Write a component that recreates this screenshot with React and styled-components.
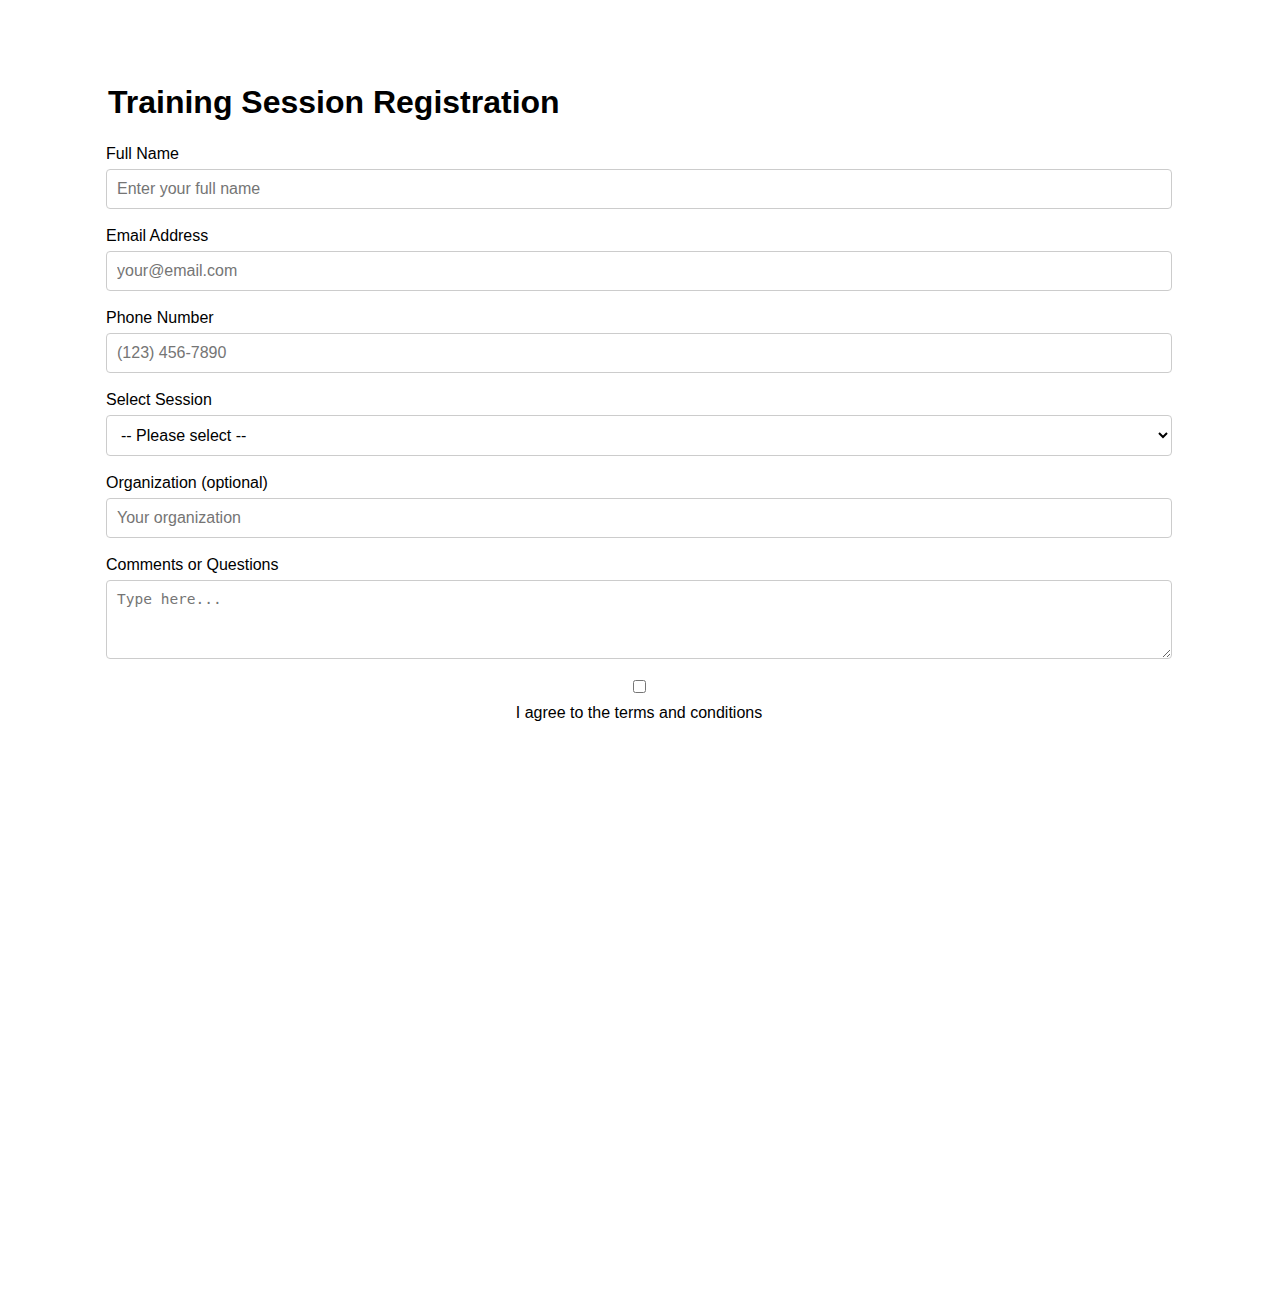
import React from "react";
import styled, { createGlobalStyle } from "styled-components";

const GlobalStyle = createGlobalStyle`
  * { box-sizing: border-box; }
  html, body { margin: 0; padding: 0; background: #fff; }
  body {
    font-family: "Liberation Sans", Arial, sans-serif;
    color: #000;
  }
`;

const Page = styled.main`
  width: 1066px;
  margin: 0 auto;
  padding-top: 84px;
`;

const Title = styled.h1`
  font-size: 32px;
  font-weight: 700;
  margin: 0 0 24px 2px;
  line-height: 37px;
`;

const Form = styled.form`
  display: flex;
  flex-direction: column;
`;

const Field = styled.div`
  display: flex;
  flex-direction: column;
  margin-bottom: 18px;
`;

const Label = styled.label`
  font-size: 16px;
  line-height: 18px;
  margin-bottom: 6px;
`;

const controlBase = `
  width: 100%;
  padding: 10px;
  border: 1px solid #ccc;
  border-radius: 4px;
  font-size: 16px;
  background: #fff;
  color: #000;
  &::placeholder { color: #757575; }
`;

const Input = styled.input`
  ${controlBase}
  font-family: "Liberation Sans", Arial, sans-serif;
  height: 40px;
`;

const Select = styled.select`
  ${controlBase}
  font-family: "Liberation Sans", Arial, sans-serif;
  height: 41px;
`;

const TextArea = styled.textarea`
  ${controlBase}
  display: block;
  font-family: "DejaVu Sans Mono", "Liberation Mono", monospace;
  font-size: 14.5px;
  height: 79px;
  resize: vertical;
`;

const Agreement = styled.div`
  display: flex;
  flex-direction: column;
  align-items: center;
  gap: 11px;
  margin-top: 3px;
`;

const Check = styled.input`
  width: 13px;
  height: 13px;
  margin: 0;
`;

const AgreeText = styled.label`
  font-size: 16px;
  line-height: 18px;
`;

export default function App() {
  return (
    <>
      <GlobalStyle />
      <Page>
        <Title>Training Session Registration</Title>
        <Form onSubmit={(e) => e.preventDefault()}>
          <Field>
            <Label htmlFor="name">Full Name</Label>
            <Input id="name" type="text" placeholder="Enter your full name" />
          </Field>
          <Field>
            <Label htmlFor="email">Email Address</Label>
            <Input id="email" type="email" placeholder="your@email.com" />
          </Field>
          <Field>
            <Label htmlFor="phone">Phone Number</Label>
            <Input id="phone" type="tel" placeholder="(123) 456-7890" />
          </Field>
          <Field>
            <Label htmlFor="session">Select Session</Label>
            <Select id="session" defaultValue="">
              <option value="">-- Please select --</option>
              <option value="morning">Morning Session</option>
              <option value="afternoon">Afternoon Session</option>
              <option value="evening">Evening Session</option>
            </Select>
          </Field>
          <Field>
            <Label htmlFor="org">Organization (optional)</Label>
            <Input id="org" type="text" placeholder="Your organization" />
          </Field>
          <Field>
            <Label htmlFor="comments">Comments or Questions</Label>
            <TextArea id="comments" placeholder="Type here..." />
          </Field>
          <Agreement>
            <Check id="agree" type="checkbox" />
            <AgreeText htmlFor="agree">I agree to the terms and conditions</AgreeText>
          </Agreement>
        </Form>
      </Page>
    </>
  );
}
